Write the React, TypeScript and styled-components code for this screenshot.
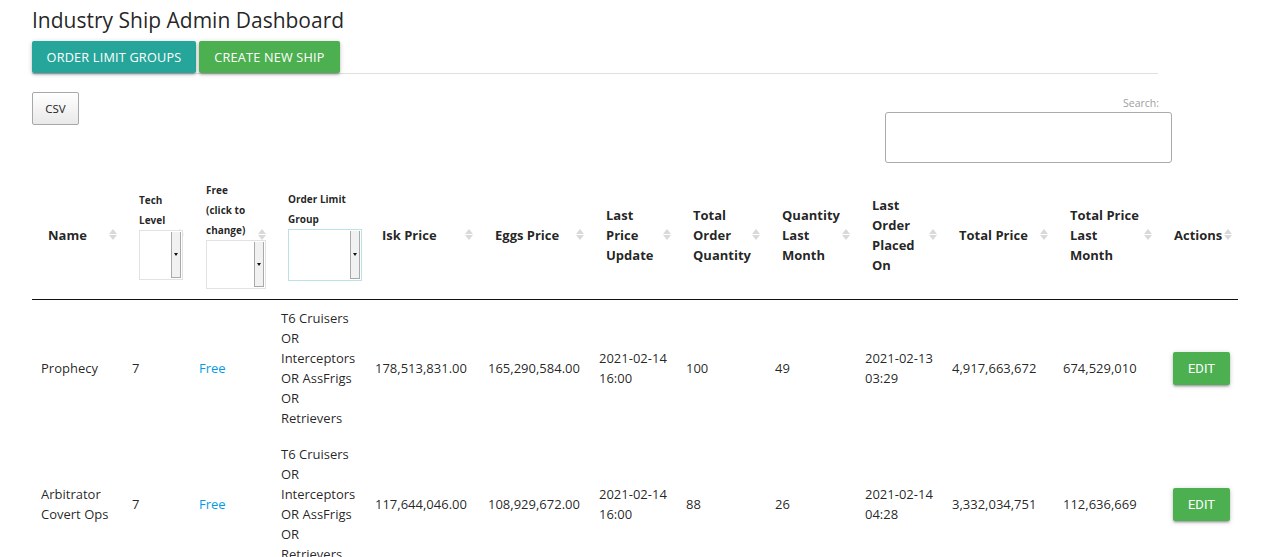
import React from "react";
import styled, { createGlobalStyle } from "styled-components";

const GlobalStyle = createGlobalStyle`
  html, body { margin: 0; padding: 0; background: #fff; }
  body {
    font-family: "Open Sans", "Noto Sans", sans-serif;
    color: rgba(0, 0, 0, 0.87);
    overflow: hidden;
  }
`;

const Page = styled.div`
  padding: 4px 0 0 32px;
  width: 1238px;
  box-sizing: border-box;
`;

const Title = styled.h1`
  margin: 0;
  font-size: 21px;
  font-weight: 400;
  line-height: 32px;
  height: 32px;
`;

const Toolbar = styled.div`
  margin-top: 5px;
  width: 1126px;
  display: flex;
  gap: 3px;
  border-bottom: 1px solid #e0e0e0;
`;

const RaisedButton = styled.button<{ $bg: string; $w: number }>`
  width: ${(p) => p.$w}px;
  height: 32px;
  border: none;
  border-radius: 2px;
  background: ${(p) => p.$bg};
  color: #fff;
  font-family: inherit;
  font-size: 12.7px;
  letter-spacing: 0.2px;
  text-transform: uppercase;
  padding: 0;
  cursor: pointer;
  box-shadow: 0 2px 2px 0 rgba(0, 0, 0, 0.14), 0 3px 1px -2px rgba(0, 0, 0, 0.12),
    0 1px 5px 0 rgba(0, 0, 0, 0.2);
`;

const Controls = styled.div`
  margin-top: 18px;
  width: 1140px;
  display: flex;
  justify-content: space-between;
  align-items: flex-start;
`;

const CsvButton = styled.button`
  width: 47px;
  height: 33px;
  border: 1px solid #a8a8a8;
  border-radius: 2px;
  background: linear-gradient(to bottom, #ffffff 0%, #e9e9e9 100%);
  font-family: inherit;
  font-size: 11.5px;
  color: #222;
  padding: 0;
`;

const SearchBox = styled.div`
  display: flex;
  flex-direction: column;
  align-items: flex-end;
  padding-top: 4px;
`;

const SearchLabel = styled.label`
  font-size: 10.5px;
  line-height: 14px;
  color: #9e9e9e;
  margin-right: 13px;
  margin-bottom: 2px;
`;

const SearchInput = styled.input`
  width: 287px;
  height: 51px;
  box-sizing: border-box;
  border: 1px solid #aaa;
  border-radius: 3px;
  background: #fff;
  outline: none;
`;

const Table = styled.table`
  margin-top: 7px;
  width: 1206px;
  table-layout: fixed;
  border-collapse: collapse;
`;

const Th = styled.th`
  position: relative;
  padding: 10px 18px 10px 16px;
  vertical-align: middle;
  text-align: left;
  font-size: 13px;
  font-weight: 700;
  line-height: 20px;
  white-space: nowrap;
  border-bottom: 1px solid #111;
`;

const SmallLabel = styled.div`
  font-size: 10px;
  line-height: 20px;
  white-space: nowrap;
`;

const SortIcon = styled.span`
  position: absolute;
  right: 6px;
  top: 50%;
  margin-top: -6px;
  display: flex;
  flex-direction: column;
  gap: 1px;
  &::before,
  &::after {
    content: "";
    width: 0;
    height: 0;
    border-left: 4px solid transparent;
    border-right: 4px solid transparent;
  }
  &::before { border-bottom: 5px solid #d9d9d9; }
  &::after { border-top: 5px solid #d9d9d9; }
`;

const FakeSelect = styled.div<{ $w: number; $h: number; $accent?: boolean }>`
  position: relative;
  z-index: 1;
  width: ${(p) => p.$w}px;
  height: ${(p) => p.$h}px;
  box-sizing: border-box;
  border: 1px solid ${(p) => (p.$accent ? "#b9e3e6" : "#e2e2e2")};
  background: #fff;
  display: flex;
  justify-content: flex-end;
  padding: 1px;
`;

const SelectStrip = styled.div`
  width: 10px;
  box-sizing: border-box;
  background: #f1f1f1;
  border-left: 1px solid #a9a9a9;
  border-right: 1px solid #a9a9a9;
  border-bottom: 1px solid #a9a9a9;
  display: flex;
  align-items: center;
  justify-content: center;
  &::after {
    content: "";
    border-left: 2.5px solid transparent;
    border-right: 2.5px solid transparent;
    border-top: 3px solid #111;
  }
`;

const Td = styled.td`
  padding: 8px 9px;
  vertical-align: middle;
  font-size: 13px;
  line-height: 20px;
  overflow: visible;
  white-space: nowrap;
`;

const FreeLink = styled.a`
  color: #039be5;
  text-decoration: none;
`;

const EditButton = styled.button`
  margin-left: 6px;
  height: 33px;
  width: 57px;
  border: none;
  border-radius: 2px;
  background: #4caf50;
  color: #fff;
  font-family: Roboto, sans-serif;
  font-size: 13px;
  padding: 0;
  box-shadow: 0 2px 2px 0 rgba(0, 0, 0, 0.14), 0 3px 1px -2px rgba(0, 0, 0, 0.12),
    0 1px 5px 0 rgba(0, 0, 0, 0.2);
`;

const widths = [91, 67, 82, 94, 113, 111, 87, 89, 90, 87, 111, 104, 80];

type Head = {
  lines: string[];
  small?: boolean;
  select?: { w: number; h: number; accent?: boolean };
};

const heads: Head[] = [
  { lines: ["Name"] },
  { lines: ["Tech", "Level"], small: true, select: { w: 44, h: 50 } },
  { lines: ["Free", "(click to", "change)"], small: true, select: { w: 60, h: 49 } },
  { lines: ["Order Limit", "Group"], small: true, select: { w: 74, h: 52, accent: true } },
  { lines: ["Isk Price"] },
  { lines: ["Eggs Price"] },
  { lines: ["Last", "Price", "Update"] },
  { lines: ["Total", "Order", "Quantity"] },
  { lines: ["Quantity", "Last", "Month"] },
  { lines: ["Last", "Order", "Placed", "On"] },
  { lines: ["Total Price"] },
  { lines: ["Total Price", "Last", "Month"] },
  { lines: ["Actions"] },
];

const group = ["T6 Cruisers", "OR", "Interceptors", "OR AssFrigs", "OR", "Retrievers"];

const rows = [
  {
    name: ["Prophecy"],
    tech: "7",
    isk: "178,513,831.00",
    eggs: "165,290,584.00",
    update: ["2021-02-14", "16:00"],
    qty: "100",
    lastMonth: "49",
    placed: ["2021-02-13", "03:29"],
    total: "4,917,663,672",
    totalLast: "674,529,010",
  },
  {
    name: ["Arbitrator", "Covert Ops"],
    tech: "7",
    isk: "117,644,046.00",
    eggs: "108,929,672.00",
    update: ["2021-02-14", "16:00"],
    qty: "88",
    lastMonth: "26",
    placed: ["2021-02-14", "04:28"],
    total: "3,332,034,751",
    totalLast: "112,636,669",
  },
];

const Lines = ({ items }: { items: string[] }) => (
  <>
    {items.map((t, i) => (
      <React.Fragment key={i}>
        {i > 0 && <br />}
        {t}
      </React.Fragment>
    ))}
  </>
);

export default function App() {
  return (
    <>
      <GlobalStyle />
      <Page>
        <Title>Industry Ship Admin Dashboard</Title>
        <Toolbar>
          <RaisedButton $bg="#26a69a" $w={164}>Order Limit Groups</RaisedButton>
          <RaisedButton $bg="#4caf50" $w={141}>Create New Ship</RaisedButton>
        </Toolbar>
        <Controls>
          <CsvButton>CSV</CsvButton>
          <SearchBox>
            <SearchLabel>Search:</SearchLabel>
            <SearchInput type="search" />
          </SearchBox>
        </Controls>
        <Table>
          <colgroup>
            {widths.map((w, i) => (
              <col key={i} style={{ width: w }} />
            ))}
          </colgroup>
          <thead>
            <tr>
              {heads.map((h, i) => (
                <Th key={i}>
                  <SortIcon />
                  {h.small ? (
                    <SmallLabel>
                      <Lines items={h.lines} />
                    </SmallLabel>
                  ) : (
                    <Lines items={h.lines} />
                  )}
                  {h.select && (
                    <FakeSelect $w={h.select.w} $h={h.select.h} $accent={h.select.accent}>
                      <SelectStrip />
                    </FakeSelect>
                  )}
                </Th>
              ))}
            </tr>
          </thead>
          <tbody>
            {rows.map((r, i) => (
              <tr key={i}>
                <Td><Lines items={r.name} /></Td>
                <Td>{r.tech}</Td>
                <Td><FreeLink href="#">Free</FreeLink></Td>
                <Td><Lines items={group} /></Td>
                <Td>{r.isk}</Td>
                <Td>{r.eggs}</Td>
                <Td><Lines items={r.update} /></Td>
                <Td>{r.qty}</Td>
                <Td>{r.lastMonth}</Td>
                <Td><Lines items={r.placed} /></Td>
                <Td>{r.total}</Td>
                <Td>{r.totalLast}</Td>
                <Td><EditButton>EDIT</EditButton></Td>
              </tr>
            ))}
          </tbody>
        </Table>
      </Page>
    </>
  );
}
